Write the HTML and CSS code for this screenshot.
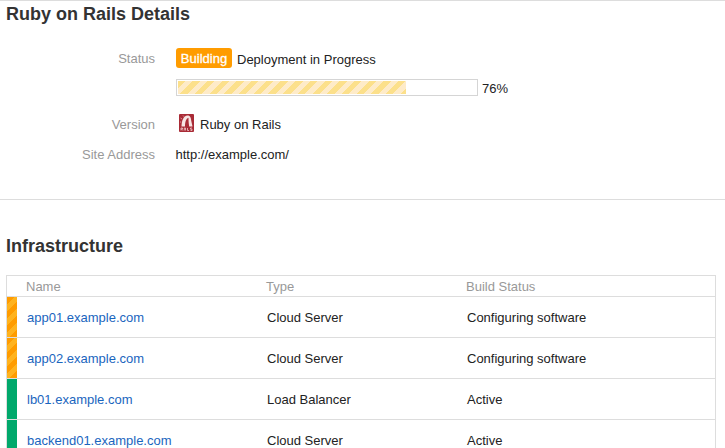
FILE: index.html
```html
<!DOCTYPE html>
<html lang="en">
<head>
<meta charset="utf-8">
<title>Ruby on Rails Details</title>
<link rel="stylesheet" href="styles.css">
</head>
<body>
<section class="details">
  <h2>Ruby on Rails Details</h2>
  <div class="field status">
    <span class="label">Status</span>
    <span class="badge">Building</span>
    <span class="value">Deployment in Progress</span>
  </div>
  <div class="progress">
    <div class="track"><div class="fill" style="width:228px"></div></div>
    <span>76%</span>
  </div>
  <div class="field version">
    <span class="label">Version</span>
    <svg class="logo" width="15" height="18" viewBox="0 0 15 18" aria-hidden="true">
      <rect width="15" height="18" rx="1" fill="#a92b36"/>
      <path d="M2.500 12.500C2.500 7 4.500 1.500 8.500 1.500C11.500 1.500 12 4 12.300 7L13.500 12.500H10.200C9.500 8 9.500 5 9.500 3.700C7 4.500 6 8 6 12.500Z" fill="#f7e5e4"/>
      <path d="M1.500 4l1.500 1M4 1.500l1 1.200M1 8h1.200" stroke="#d9949a" fill="none"/>
      <path d="M2 16.500V14h1.500v1H2.500l1.300 1.500M5.300 16.500V14h1.200v2.500M8.500 14v2.500h1.500M13 14h-1.500v1.200H13v1.300h-1.500" stroke="#edc8c9" stroke-width=".8" fill="none"/>
    </svg>
    <span class="value">Ruby on Rails</span>
  </div>
  <div class="field address">
    <span class="label">Site Address</span>
    <span>http://example.com/</span>
  </div>
</section>
<section class="infrastructure">
  <h2>Infrastructure</h2>
  <div class="table">
    <div class="row head"><span></span><span>Name</span><span>Type</span><span>Build Status</span></div>
    <div class="row"><i class="strip building"></i><a>app01.example.com</a><span>Cloud Server</span><span>Configuring software</span></div>
    <div class="row"><i class="strip building"></i><a>app02.example.com</a><span>Cloud Server</span><span>Configuring software</span></div>
    <div class="row"><i class="strip active"></i><a>lb01.example.com</a><span>Load Balancer</span><span>Active</span></div>
    <div class="row"><i class="strip active"></i><a>backend01.example.com</a><span>Cloud Server</span><span>Active</span></div>
  </div>
</section>
</body>
</html>
```
FILE: styles.css
```css
* { box-sizing: border-box; }
html { overflow: hidden; }
body {
  margin: 0;
  height: 448px;
  overflow: hidden;
  background: #fff;
  color: #222;
  font: 13px/20px "Liberation Sans", Arial, sans-serif;
}
h2 {
  margin: 0;
  color: #333;
  font-size: 18px;
  line-height: 24px;
}
.details {
  height: 199px;
  padding-left: 6px;
  border-top: 1px solid #ddd;
}
.details h2 { padding-top: 1px; }
.field {
  display: flex;
  height: 20px;
  align-items: flex-start;
}
.label {
  width: 149px;
  margin-right: 21px;
  color: #999;
  text-align: right;
}
.status { margin-top: 22px; }
.status .label { line-height: 22px; }
.status .value { line-height: 24px; }
.badge {
  width: 56px;
  height: 20px;
  margin-right: 5px;
  border-radius: 3px;
  background: #ff9c00;
  color: #fff;
  line-height: 21px;
  text-align: center;
  -webkit-text-stroke: .3px #fff;
}
.progress {
  display: flex;
  height: 17px;
  margin: 11px 0 0 170px;
  line-height: 20px;
}
.track {
  width: 302px;
  height: 17px;
  margin-right: 4px;
  padding: 1px;
  border: 1px solid #d5d5d5;
}
.fill {
  height: 13px;
  background: repeating-linear-gradient(135deg, #fce08b 0 5.2px, #feebc8 5.2px 10.4px);
}
.version { margin-top: 18px; }
.version .label,
.version .value { line-height: 22px; }
.logo { margin: 0 6px 0 3px; }
.address { margin-top: 11px; }
.address .label { margin-right: 20.5px; }
.infrastructure {
  padding: 34px 9px 0 6px;
  border-top: 1px solid #ddd;
}
.table {
  margin-top: 17px;
  border: 1px solid #ddd;
}
.row {
  display: grid;
  grid-template-columns: 10px 250px 200px 1fr;
  grid-template-rows: 100%;
  height: 41px;
  border-bottom: 1px solid #ddd;
  line-height: 42px;
}
.row > :nth-child(2) { padding-left: 10px; }
.row.head {
  height: 21px;
  color: #999;
  line-height: 22px;
}
.row.head > :nth-child(2) { padding-left: 9px; }
.row.head > :nth-child(n+3) { margin-left: -1px; }
.row a { color: #1a65be; }
.strip.building {
  background: repeating-linear-gradient(135deg, #ff9c00 0 5px, #ffb31e 5px 10px);
}
.strip.active { background: #00a86b; }
```
